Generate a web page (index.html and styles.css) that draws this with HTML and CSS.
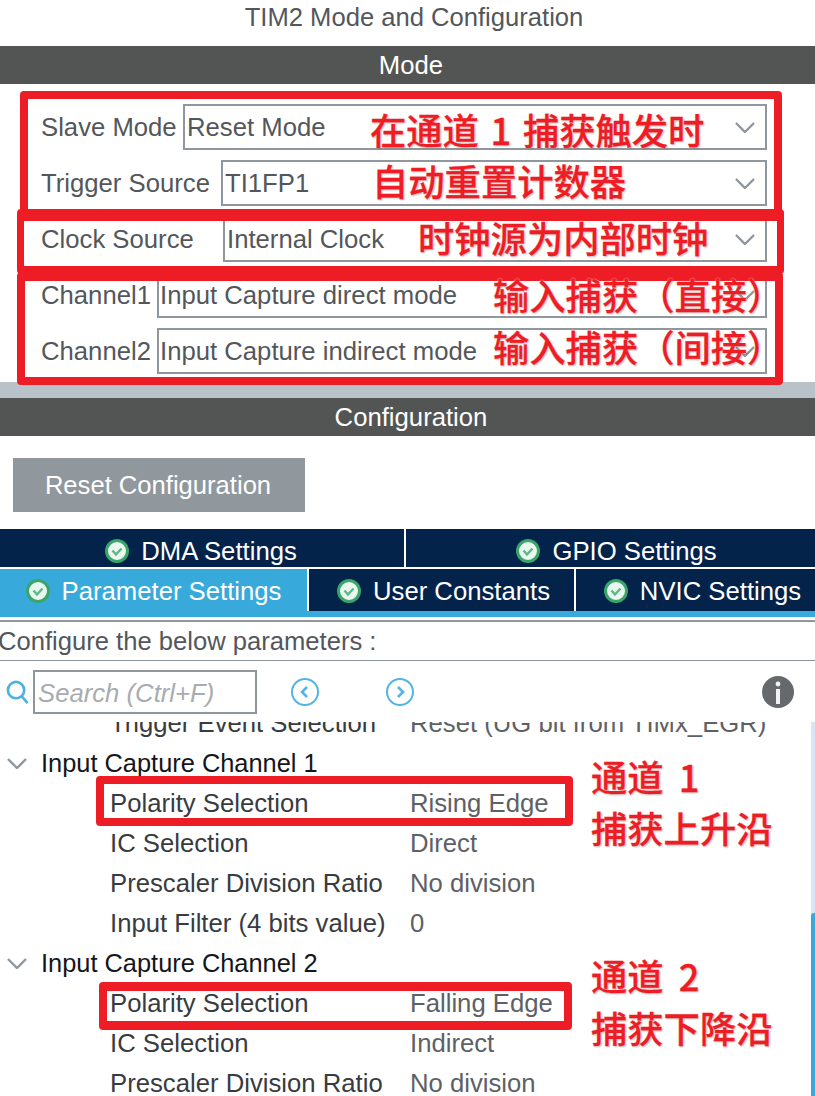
FILE: index.html
```html
<!DOCTYPE html>
<html lang="en">

<head>
    <meta charset="UTF-8">
    <meta name="viewport" content="width=device-width, initial-scale=1.0">
    <title>TIM2 Mode and Configuration</title>
    <link rel="stylesheet" href="styles.css">
</head>

<body>
    <div class="page">
        <h1 class="title">TIM2 Mode and Configuration</h1>

        <div class="bar">Mode</div>
        <div class="mode-form">
            <div class="form-row">
                <span class="form-label label-slave">Slave Mode</span>
                <div class="select">Reset Mode
                    <svg class="chevron" viewBox="0 0 20 11"><path d="M1 1l9 9 9-9"/></svg>
                </div>
            </div>
            <div class="form-row">
                <span class="form-label label-trigger">Trigger Source</span>
                <div class="select">TI1FP1
                    <svg class="chevron" viewBox="0 0 20 11"><path d="M1 1l9 9 9-9"/></svg>
                </div>
            </div>
            <div class="form-row">
                <span class="form-label label-clock">Clock Source</span>
                <div class="select">Internal Clock
                    <svg class="chevron" viewBox="0 0 20 11"><path d="M1 1l9 9 9-9"/></svg>
                </div>
            </div>
            <div class="form-row">
                <span class="form-label label-channel">Channel1</span>
                <div class="select select-tight">Input Capture direct mode
                    <svg class="chevron" viewBox="0 0 20 11"><path d="M1 1l9 9 9-9"/></svg>
                </div>
            </div>
            <div class="form-row">
                <span class="form-label label-channel">Channel2</span>
                <div class="select select-tight">Input Capture indirect mode
                    <svg class="chevron" viewBox="0 0 20 11"><path d="M1 1l9 9 9-9"/></svg>
                </div>
            </div>
        </div>
        <div class="strip"></div>

        <div class="bar">Configuration</div>
        <div class="config-top">
            <button class="reset-btn">Reset Configuration</button>
        </div>

        <div class="tabs tabs-upper">
            <div class="tab tab-dma">
                <svg class="check" viewBox="0 0 24 24"><circle cx="12" cy="12" r="10.5"/><path d="M7.5 11.5l3.5 4 5.5-6"/></svg>
                DMA Settings
            </div>
            <div class="tab tab-gpio">
                <svg class="check" viewBox="0 0 24 24"><circle cx="12" cy="12" r="10.5"/><path d="M7.5 11.5l3.5 4 5.5-6"/></svg>
                GPIO Settings
            </div>
        </div>
        <div class="tabs tabs-lower">
            <div class="tab tab-param active">
                <svg class="check" viewBox="0 0 24 24"><circle cx="12" cy="12" r="10.5"/><path d="M7.5 11.5l3.5 4 5.5-6"/></svg>
                Parameter Settings
            </div>
            <div class="tab tab-user">
                <svg class="check" viewBox="0 0 24 24"><circle cx="12" cy="12" r="10.5"/><path d="M7.5 11.5l3.5 4 5.5-6"/></svg>
                User Constants
            </div>
            <div class="tab tab-nvic">
                <svg class="check" viewBox="0 0 24 24"><circle cx="12" cy="12" r="10.5"/><path d="M7.5 11.5l3.5 4 5.5-6"/></svg>
                NVIC Settings
            </div>
        </div>

        <div class="params-head">Configure the below parameters :</div>

        <div class="search-row">
            <svg class="search-icon" viewBox="0 0 24 26"><circle cx="10.5" cy="10.5" r="8.5"/><path d="M16.5 17l6 7"/></svg>
            <div class="search-box">Search (Ctrl+F)</div>
            <svg class="nav-icon nav-prev" viewBox="0 0 28 28"><circle cx="14" cy="14" r="13"/><path d="M16 9l-5 5 5 5"/></svg>
            <svg class="nav-icon nav-next" viewBox="0 0 28 28"><circle cx="14" cy="14" r="13"/><path d="M12 9l5 5-5 5"/></svg>
            <svg class="info-icon" viewBox="0 0 32 32">
                <circle cx="16" cy="16" r="16"/>
                <circle class="info-mark" cx="16" cy="8" r="2.4"/>
                <rect class="info-mark" x="14" y="13" width="4" height="15"/>
            </svg>
        </div>

        <div class="tree">
            <div class="tree-row tree-first">
                <span class="tree-label">Trigger Event Selection</span>
                <span class="tree-value">Reset (UG bit from TIMx_EGR)</span>
            </div>
            <div class="tree-section">
                <svg class="tree-arrow" viewBox="0 0 20 11"><path d="M1 1l9 9 9-9"/></svg>
                Input Capture Channel 1
            </div>
            <div class="tree-row">
                <span class="tree-label">Polarity Selection</span>
                <span class="tree-value">Rising Edge</span>
            </div>
            <div class="tree-row">
                <span class="tree-label">IC Selection</span>
                <span class="tree-value">Direct</span>
            </div>
            <div class="tree-row">
                <span class="tree-label">Prescaler Division Ratio</span>
                <span class="tree-value">No division</span>
            </div>
            <div class="tree-row">
                <span class="tree-label">Input Filter (4 bits value)</span>
                <span class="tree-value">0</span>
            </div>
            <div class="tree-section">
                <svg class="tree-arrow" viewBox="0 0 20 11"><path d="M1 1l9 9 9-9"/></svg>
                Input Capture Channel 2
            </div>
            <div class="tree-row">
                <span class="tree-label">Polarity Selection</span>
                <span class="tree-value">Falling Edge</span>
            </div>
            <div class="tree-row">
                <span class="tree-label">IC Selection</span>
                <span class="tree-value">Indirect</span>
            </div>
            <div class="tree-row">
                <span class="tree-label">Prescaler Division Ratio</span>
                <span class="tree-value">No division</span>
            </div>
            <div class="scroll-track"><div class="scroll-thumb"></div></div>
        </div>

        <!-- red annotations drawn over the screenshot -->
        <div class="mark mark-slave"></div>
        <div class="mark mark-clock"></div>
        <div class="mark mark-channels"></div>
        <div class="mark mark-rising"></div>
        <div class="mark mark-falling"></div>

        <div class="note note-slave">在通道 1 捕获触发时</div>
        <div class="note note-trigger">自动重置计数器</div>
        <div class="note note-clock">时钟源为内部时钟</div>
        <div class="note note-ch1">输入捕获（直接）</div>
        <div class="note note-ch2">输入捕获（间接）</div>
        <div class="note note-t1">通道 1</div>
        <div class="note note-t2">捕获上升沿</div>
        <div class="note note-t3">通道 2</div>
        <div class="note note-t4">捕获下降沿</div>
    </div>
</body>

</html>
```

FILE: styles.css
```css
body {
    margin: 0;
    background-color: #fff;
    font-family: "Liberation Sans", Arial, sans-serif;
    font-size: 25.7px;
    color: #53575b;
}

.page {
    position: relative;
    width: 815px;
    height: 1096px;
    overflow: hidden;
}

.title {
    margin: 0;
    height: 46px;
    padding-left: 13px;
    box-sizing: border-box;
    line-height: 34px;
    text-align: center;
    font-size: 25.6px;
    font-weight: normal;
    color: #53575b;
}

.bar {
    height: 38px;
    padding-left: 7px;
    line-height: 38px;
    text-align: center;
    background-color: #535554;
    color: #fff;
}

/* mode form */
.mode-form {
    height: 278px;
    padding: 20px 48px 0 41px;
    display: flex;
    flex-direction: column;
    gap: 10px;
}

.form-row {
    display: flex;
    align-items: center;
    height: 46px;
}

.form-label {
    flex-shrink: 0;
    white-space: nowrap;
}

.label-slave {
    width: 142px;
}

.label-trigger {
    width: 180px;
}

.label-clock {
    width: 182px;
}

.label-channel {
    width: 116px;
}

.select {
    flex: 1;
    height: 46px;
    box-sizing: border-box;
    border: 2px solid #8f979c;
    padding-left: 2px;
    line-height: 42px;
    display: flex;
    align-items: center;
    justify-content: space-between;
    white-space: nowrap;
}

.select-tight {
    padding-left: 1px;
}

.chevron {
    width: 20px;
    height: 11px;
    margin-right: 10px;
    flex-shrink: 0;
}

.chevron path,
.tree-arrow path {
    fill: none;
    stroke: #8f979c;
    stroke-width: 2.4;
}

.strip {
    height: 16px;
    background-color: #b8c2c8;
}

.config-top {
    height: 93px;
    box-sizing: border-box;
    padding: 22px 13px 0;
}

.reset-btn {
    display: block;
    width: 292px;
    height: 54px;
    border: 0;
    padding: 0 2px 0 0;
    background-color: #90979d;
    color: #fff;
    font-family: inherit;
    font-size: 25.6px;
}

/* tabs */
.tabs {
    display: flex;
    color: #fff;
}

.tabs-upper {
    height: 38px;
    margin-bottom: 2px;
}

.tabs-lower {
    height: 48px;
    align-items: flex-start;
    background: linear-gradient(#fff 42px, #38a9db 42px);
}

.tab {
    display: flex;
    align-items: center;
    justify-content: center;
    gap: 12px;
    box-sizing: border-box;
    height: 38px;
    background-color: #03234b;
    white-space: nowrap;
}

.tabs-upper .tab {
    padding-top: 6px;
}

.tabs-lower .tab {
    height: 42px;
    padding-top: 2px;
}

.tab-dma {
    width: 406px;
    border-right: 2px solid #fff;
    padding-right: 2px;
}

.tab-gpio {
    flex: 1;
    padding-left: 12px;
}

.tab-param {
    width: 307px;
}

.tab-user {
    width: 269px;
    border-left: 2px solid #fff;
    border-right: 2px solid #fff;
    padding-left: 4px;
}

.tab-nvic {
    flex: 1;
    padding-left: 14px;
}

.tabs-lower .tab.active {
    height: 48px;
    background-color: #38a9db;
    padding-top: 0;
    padding-bottom: 4px;
}

.check {
    width: 24px;
    height: 24px;
    flex-shrink: 0;
}

.check circle {
    fill: #eaf7ef;
    stroke: #3aa56b;
    stroke-width: 3;
}

.check path {
    fill: none;
    stroke: #5cb888;
    stroke-width: 2.4;
}

/* parameters header */
.params-head {
    margin-top: 3px;
    height: 38px;
    border-top: 2px solid #8f979c;
    border-bottom: 1px solid #8f979c;
    line-height: 38px;
    text-indent: -2px;
    font-size: 25.6px;
    white-space: nowrap;
}

.search-row {
    height: 61px;
    display: flex;
    align-items: flex-start;
    padding: 9px 0 0 6px;
    box-sizing: border-box;
}

.search-icon {
    width: 23px;
    height: 25px;
    margin: 10px 4px 0 0;
    flex-shrink: 0;
}

.search-icon circle,
.search-icon path {
    fill: none;
    stroke: #4cb2e2;
    stroke-width: 2.8;
}

.nav-icon circle,
.nav-icon path {
    fill: none;
    stroke: #55b4e3;
    stroke-width: 2;
}

.nav-icon path {
    stroke-width: 2.6;
}

.search-box {
    width: 224px;
    height: 44px;
    box-sizing: border-box;
    border: 2px solid #8f979c;
    padding-left: 3px;
    line-height: 42px;
    font-style: italic;
    color: #a8acb0;
    white-space: nowrap;
}

.nav-icon {
    width: 28px;
    height: 28px;
    margin-top: 8px;
    flex-shrink: 0;
}

.nav-prev {
    margin-left: 34px;
}

.nav-next {
    margin-left: 67px;
}

.info-icon {
    width: 32px;
    height: 32px;
    margin: 6px 0 0 348px;
    flex-shrink: 0;
    fill: #66696b;
}

.info-mark {
    fill: #f2f2f2;
}

/* parameter tree */
.tree {
    position: relative;
    height: 374px;
    overflow: hidden;
}

.tree-row {
    display: flex;
    height: 40px;
    line-height: 40px;
    padding-left: 110px;
    white-space: nowrap;
}

.tree-first {
    margin-top: -19px;
}

.tree-label {
    width: 300px;
    color: #383b3f;
}

.tree-value {
    color: #5d6165;
}

.tree-section {
    display: flex;
    align-items: center;
    height: 40px;
    padding-left: 7px;
    font-size: 25.4px;
    color: #14161a;
    white-space: nowrap;
}

.tree-arrow {
    width: 20px;
    height: 11px;
    margin-right: 14px;
    flex-shrink: 0;
}

.scroll-track {
    position: absolute;
    top: 0;
    right: 0;
    bottom: 0;
    width: 4px;
    background-color: #d6e6f5;
}

.scroll-thumb {
    margin-top: 191px;
    height: 300px;
    background-color: #38a9db;
    border-radius: 3px 0 0 0;
}

/* annotations */
.mark {
    position: absolute;
    box-sizing: border-box;
    border: 8px solid #ee1c25;
    border-radius: 4px;
}

.mark-slave {
    left: 20px;
    top: 91px;
    width: 762px;
    height: 130px;
}

.mark-clock {
    left: 17px;
    top: 209px;
    width: 767px;
    height: 65px;
    border-width: 10px 7px 8px;
}

.mark-channels {
    left: 17px;
    top: 272px;
    width: 766px;
    height: 113px;
    border-width: 9px 8px 8px;
}

.mark-rising {
    left: 96px;
    top: 776px;
    width: 477px;
    height: 50px;
}

.mark-falling {
    left: 99px;
    top: 982px;
    width: 473px;
    height: 48px;
    border-width: 9px 8px;
}

.note {
    position: absolute;
    height: 50px;
    line-height: 50px;
    font-family: "Noto Sans CJK SC", sans-serif;
    font-size: 36.3px;
    font-weight: 500;
    word-spacing: 3.5px;
    color: #ee1c25;
    white-space: nowrap;
    -webkit-text-stroke: 0.3px #ee1c25;
    text-shadow: 0 0 2px #fff, 1px 1px 2px rgba(0, 0, 0, 0.35);
}

.note-slave {
    left: 370px;
    top: 104px;
}

.note-trigger {
    left: 372px;
    top: 155px;
}

.note-clock {
    left: 418px;
    top: 212px;
}

.note-ch1 {
    left: 493px;
    top: 269px;
}

.note-ch2 {
    left: 493px;
    top: 321px;
}

.note-t1 {
    left: 591px;
    top: 751px;
    word-spacing: 7px;
}

.note-t2 {
    left: 591px;
    top: 802px;
}

.note-t3 {
    left: 591px;
    top: 950px;
    word-spacing: 7px;
}

.note-t4 {
    left: 591px;
    top: 1002px;
}
```
